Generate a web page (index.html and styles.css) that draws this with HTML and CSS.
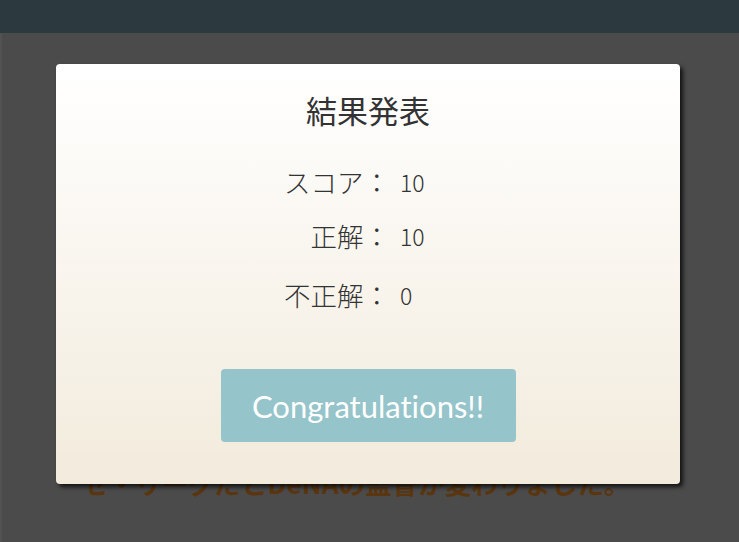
FILE: index.html
```html
<!DOCTYPE html>
<html lang="ja">
<head>
<meta charset="utf-8">
<title>結果発表</title>
<link rel="stylesheet" href="styles.css">
</head>
<body>
<header class="topbar"></header>
<main class="page">
  <p class="news">セ・リーグだとDeNAの監督が変わりました。</p>
</main>
<div class="overlay">
  <section class="modal">
    <h1 class="modal-title">結果発表</h1>
    <div class="results">
      <span class="label">スコア：</span><span class="value">10</span>
      <span class="label">正解：</span><span class="value">10</span>
      <span class="label last">不正解：</span><span class="value last">0</span>
    </div>
    <button class="congrats">Congratulations!!</button>
  </section>
</div>
</body>
</html>
```

FILE: styles.css
```css
html, body {
  margin: 0;
  padding: 0;
  height: 100%;
}
body {
  background: #4b4b4b;
  font-family: "Noto Sans CJK JP", "Noto Sans", sans-serif;
  overflow: hidden;
}
.topbar {
  height: 33px;
  background: #2c3a40;
}
.page {
  border-left: 2px solid #525252;
  height: calc(100% - 33px);
  box-sizing: border-box;
  padding: 433px 0 0 80px;
}
.news {
  margin: 0;
  font-size: 26.5px;
  font-weight: 700;
  color: #5a3610;
  line-height: 34px;
}
.overlay {
  position: absolute;
  left: 56px;
  top: 64px;
}
.modal {
  width: 624px;
  height: 420px;
  box-sizing: border-box;
  border-radius: 4px;
  background: linear-gradient(to bottom, #ffffff 0%, #f2ebdc 100%);
  box-shadow: 3px 3px 4px rgba(0, 0, 0, 0.75);
  display: flex;
  flex-direction: column;
  align-items: center;
  padding-top: 26px;
  color: #333333;
}
.modal-title {
  margin: 0;
  font-size: 31px;
  font-weight: 400;
  line-height: 40px;
}
.results {
  margin-top: 36px;
  width: 100%;
  box-sizing: border-box;
  padding-left: 54px;
  display: grid;
  grid-template-columns: 1fr 1fr;
  column-gap: 10px;
  row-gap: 22px;
  font-weight: 300;
}
.label {
  text-align: right;
  font-size: 26.5px;
  line-height: 32px;
}
.value {
  text-align: left;
  font-size: 23px;
  line-height: 32px;
}
.last {
  margin-top: 5px;
}
.congrats {
  margin-top: 58px;
  width: 295px;
  height: 73px;
  border: none;
  border-radius: 4px;
  background: #95c4ca;
  color: #ffffff;
  font-family: Lato, "Noto Sans", sans-serif;
  font-size: 31px;
  font-variant-ligatures: none;
  padding: 0;
}
```
